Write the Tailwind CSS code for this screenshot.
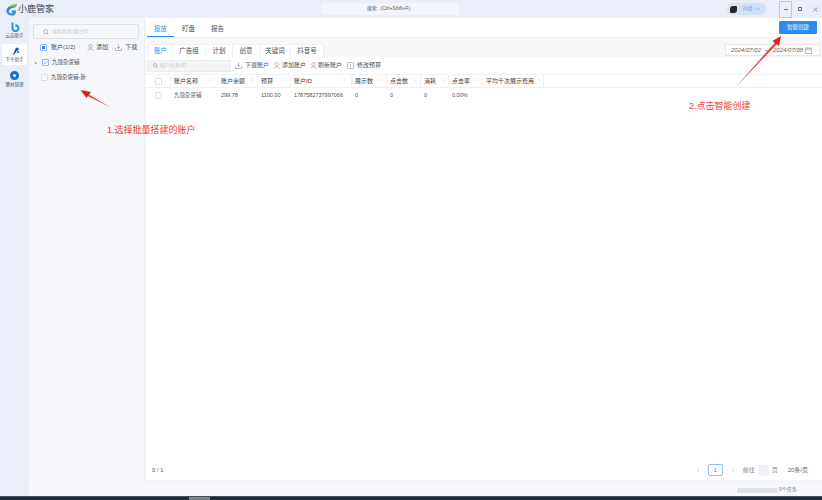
<!DOCTYPE html>
<html lang="zh">
<head>
<meta charset="utf-8">
<script src="https://cdn.jsdelivr.net/npm/@tailwindcss/browser@4"></script>
</head>
<body class="w-[822px] h-[500px] overflow-hidden bg-[#f4f6fa] text-[#4a4f57] font-['Liberation_Sans','Noto_Sans_CJK_SC',sans-serif] text-[6px]">
<div class="relative w-[822px] h-[500px] flex flex-col overflow-hidden">
  <!-- title bar -->
  <header class="h-[18px] shrink-0 bg-[#e9eef8] flex items-center relative">
    <div class="flex items-center pl-[5px] w-[322px]">
      <svg width="13" height="13" viewBox="0 0 13 13"><path d="M12 2 C7 2 3 3 1.500 6.500 C1 10 3 12.500 7 12.500 C10 12.500 11 10.500 11 7.500 L7 7.500 L6.500 9.500 L8.500 9.500 C8 10.500 5 11 4 9 C3.500 6.500 6 5 10 4.500 Z" fill="#2a8fd6"/><path d="M12.500 0.500 C9 1 6 1.500 4 3.500 L10 3.500 Z" fill="#9ccb3a"/></svg>
      <span class="text-[9px] leading-none text-[#3f4650]">小鹿管家</span>
    </div>
    <div class="w-[138px] h-[12px] bg-[#f3f5fa] rounded-[2px] flex items-center justify-center text-[5px] text-[#555]">搜索（Ctrl+Shift+F）</div>
    <div class="ml-[268px] w-[39px] h-[12px] rounded-full bg-[#cfe2fa] flex items-center">
      <span class="w-[12px] h-[12px] rounded-full bg-[#dfe3ea] flex items-center justify-center"><span class="w-[7px] h-[7px] rounded-[3px_1px_3px_1px] bg-[#25282d]"></span></span>
      <span class="ml-[3px] text-[5px] text-[#7f9cc0]">刘靖</span>
      <svg class="ml-[3px]" width="5" height="4" viewBox="0 0 5 4"><path d="M0.500 1 L2.500 3 L4.500 1" fill="none" stroke="#8aa5c8" stroke-width="0.600"/></svg>
    </div>
    <div class="ml-[13px] w-[13px] h-[17px] border border-[#c6cad0] flex items-center justify-center"><span class="w-[4px] h-px bg-[#777]"></span></div>
    <div class="w-[16px] flex justify-center"><span class="w-[4px] h-[4px] border border-[#777]"></span></div>
    <div class="w-[14px] flex justify-center"><svg width="5" height="5" viewBox="0 0 5 5"><path d="M0.500 0.500 L4.500 4.500 M4.500 0.500 L0.500 4.500" stroke="#777" stroke-width="0.700"/></svg></div>
  </header>

  <div class="flex flex-1 min-h-0">
    <!-- app rail -->
    <nav class="w-[29px] shrink-0 bg-[#e9eef8] flex flex-col items-center text-[4.500px] text-[#4c5868]">
      <div class="h-[24px] w-[25px] flex flex-col items-center justify-center pt-[1px]">
        <svg width="10" height="10" viewBox="0 0 10 10"><path d="M2.500 0.500 V6 A3 3 0 1 0 5.500 3.200" fill="none" stroke="#1a8fe0" stroke-width="1.900"/></svg>
        <span class="mt-[2px] leading-none">云店助手</span>
      </div>
      <div class="mt-[2px] h-[21px] w-[25px] bg-white rounded-[2px] flex flex-col items-center justify-center pt-[1px]">
        <svg width="10" height="9" viewBox="0 0 10 9"><path d="M1 8 C3 8 4 6 4.500 4 C5 2 6 0.500 8 0.500 L9 3 C7 3 6.500 4 6 5 C5 7 3 8.500 1 8 Z" fill="#1e4f9c"/><circle cx="8" cy="5" r="1.300" fill="#35b0c9"/></svg>
        <span class="mt-[2px] leading-none">千牛助手</span>
      </div>
      <div class="mt-[1px] h-[24px] w-[25px] flex flex-col items-center justify-center pt-[2px]">
        <span class="w-[9px] h-[9px] rounded-full border-[3px] border-[#0f6fdc] bg-white"></span>
        <span class="mt-[3px] leading-none">聚材管理</span>
      </div>
    </nav>

    <!-- accounts panel -->
    <aside class="w-[115px] shrink-0 ml-px mb-[13px] bg-[#f5f7fa] border-r border-b border-[#eceef2] pl-[3px] pt-[6px]">
      <div class="w-[106px] h-[15px] border border-[#dfe3e8] bg-[#f7f8fa] flex items-center rounded-[1px] pl-[9px] text-[#c6cad0] text-[5px]">
        <svg width="6" height="6" viewBox="0 0 6 6"><circle cx="2.600" cy="2.600" r="2" fill="none" stroke="#8a9099" stroke-width="0.600"/><path d="M4 4 L5.500 5.500" stroke="#8a9099" stroke-width="0.600"/></svg>
        <span class="ml-[3px]">搜索名称/备注ID</span>
      </div>
      <div class="flex items-center mt-[4px] h-[9px] pl-[7px]">
        <span class="w-[7px] h-[7px] rounded-[1px] border border-[#8fbdf2] flex items-center justify-center"><span class="w-[3px] h-[3px] bg-[#2d8cf0]"></span></span>
        <span class="ml-[4px]">账户(1/2)</span>
        <svg class="ml-[12px]" width="7" height="7" viewBox="0 0 7 7"><circle cx="3.500" cy="2.200" r="1.700" fill="none" stroke="#777" stroke-width="0.500"/><path d="M0.700 6.700 C1 4.300 6 4.300 6.300 6.700" fill="none" stroke="#777" stroke-width="0.500"/></svg>
        <span class="ml-[2px]">添加</span>
        <svg class="ml-[7px]" width="7" height="7" viewBox="0 0 7 7"><path d="M3.500 0.500 V4.500 M2 3 L3.500 4.500 L5 3 M0.500 4 V6.500 H6.500 V4" fill="none" stroke="#777" stroke-width="0.500"/></svg>
        <span class="ml-[3px]">下载</span>
      </div>
      <div class="flex items-center mt-[6px] h-[9px] pl-[2px]">
        <span class="w-0 h-0 border-y-[1.500px] border-y-transparent border-l-[2px] border-l-[#777]"></span>
        <span class="ml-[5px] w-[7px] h-[7px] rounded-[1px] border border-[#8fbdf2] flex items-center justify-center"><svg width="5" height="5" viewBox="0 0 5 5"><path d="M0.800 2.500 L2 3.700 L4.200 1.200" fill="none" stroke="#2d8cf0" stroke-width="0.600"/></svg></span>
        <span class="ml-[3px] text-[#3c4046] text-[5.500px]">九锦杂货铺</span>
      </div>
      <div class="flex items-center mt-[6px] h-[9px] pl-[8px]">
        <span class="w-[7px] h-[7px] rounded-[1px] border border-[#dcdfe4]"></span>
        <span class="ml-[3px] text-[#3c4046] text-[5.500px]">九锦杂货铺-新</span>
      </div>
    </aside>

    <!-- main -->
    <main class="w-[677px] ml-px mb-[20px] bg-white flex flex-col">
      <div class="h-[20px] shrink-0 flex items-end border-b border-[#eef0f3] relative pl-[1px]">
        <div class="w-[27px] h-[20px] pt-[4px] flex items-center justify-center text-[#2d8cf0] border-b border-[#2d8cf0] text-[6.500px]">投放</div>
        <div class="ml-[8px] h-[20px] pt-[4px] flex items-center text-[6.500px]">盯盘</div>
        <div class="ml-[16px] h-[20px] pt-[4px] flex items-center text-[6.500px]">报告</div>
        <div class="absolute right-[5px] top-[3px] w-[38px] h-[13px] rounded-[1px] bg-[#2d8cf0] text-white flex items-center justify-center text-[5.500px]">智能创建</div>
      </div>
      <div class="h-[19px] shrink-0 bg-[#f7f8fa] flex items-end pl-[2px] relative">
        <div class="w-[25px] h-[13px] bg-white flex items-center justify-center text-[#2d8cf0] text-[6.500px] border border-[#eef0f3] border-b-0">账户</div>
        <div class="w-[33px] h-[13px] bg-white flex items-center justify-center text-[6.500px] border-r border-t border-[#eef0f3]">广告组</div>
        <div class="w-[27px] h-[13px] bg-white flex items-center justify-center text-[6.500px] border-r border-t border-[#eef0f3]">计划</div>
        <div class="w-[27px] h-[13px] bg-white flex items-center justify-center text-[6.500px] border-r border-t border-[#eef0f3]">创意</div>
        <div class="w-[31px] h-[13px] bg-white flex items-center justify-center text-[6.500px] border-r border-t border-[#eef0f3]">关键词</div>
        <div class="w-[33px] h-[13px] bg-white flex items-center justify-center text-[6.500px] border-r border-t border-[#eef0f3]">抖音号</div>
        <div class="absolute left-[579px] top-[6px] w-[95px] h-[12px] bg-white border border-[#e4e7ec] flex items-center pl-[5px] text-[6px] italic text-[#666]">
          <span>2024/07/02</span><span class="ml-[4px] w-[4px] h-px bg-[#aaa]"></span><span class="ml-[4px]">2024/07/08</span>
          <svg class="ml-[2px]" width="7" height="7" viewBox="0 0 7 7"><path d="M0.500 1.200 H6.500 V6.500 H0.500 Z M0.500 2.800 H6.500 M2 0.300 V1.800 M5 0.300 V1.800" fill="none" stroke="#777" stroke-width="0.500"/></svg>
        </div>
      </div>
      <div class="h-[17px] shrink-0 bg-white flex items-center pl-[1px]">
        <div class="w-[84px] h-[12px] bg-[#f3f4f6] border border-[#e9ebee] flex items-center pl-[5px] text-[#c6cad0] text-[5px]">
          <svg width="5" height="5" viewBox="0 0 6 6"><circle cx="2.600" cy="2.600" r="2" fill="none" stroke="#8a9099" stroke-width="0.700"/><path d="M4 4 L5.500 5.500" stroke="#8a9099" stroke-width="0.700"/></svg>
          <span class="ml-[2px]">账户名称/ID</span>
        </div>
        <svg class="ml-[4px]" width="7" height="7" viewBox="0 0 7 7"><path d="M3.500 0.500 V4.500 M2 3 L3.500 4.500 L5 3 M0.500 4 V6.500 H6.500 V4" fill="none" stroke="#777" stroke-width="0.500"/></svg>
        <span class="ml-[3px]">下载账户</span>
        <svg class="ml-[4px]" width="7" height="7" viewBox="0 0 7 7"><circle cx="3.500" cy="2.200" r="1.700" fill="none" stroke="#777" stroke-width="0.500"/><path d="M0.700 6.700 C1 4.300 6 4.300 6.300 6.700" fill="none" stroke="#777" stroke-width="0.500"/></svg>
        <span class="ml-[2px]">添加账户</span>
        <svg class="ml-[4px]" width="7" height="7" viewBox="0 0 7 7"><circle cx="3.500" cy="2.200" r="1.700" fill="none" stroke="#777" stroke-width="0.500"/><path d="M0.700 6.700 C1 4.300 6 4.300 6.300 6.700" fill="none" stroke="#777" stroke-width="0.500"/></svg>
        <span class="ml-[1px]">刷新账户</span>
        <svg class="ml-[5px]" width="7" height="7" viewBox="0 0 7 7"><rect x="0.500" y="0.500" width="6" height="6" rx="1" fill="none" stroke="#777" stroke-width="0.500"/><path d="M3.500 2 V5" stroke="#777" stroke-width="0.500"/></svg>
        <span class="ml-[3px]">修改预算</span>
      </div>
      <!-- table -->
      <div class="grid grid-cols-[25px_47px_40px_33px_61px_35px_34px_28px_34px_61px] h-[14px] border-t border-b border-[#eef0f3] items-stretch text-[#3f444b]">
        <div class="flex items-center justify-center border-r border-[#f0f1f4]"><span class="w-[7px] h-[7px] rounded-[1px] border border-[#dcdfe4]"></span></div>
        <div class="flex items-center justify-between pl-[3px] pr-[5px] border-r border-[#f0f1f4]"><span>账户名称</span><span class="text-[#ccc] text-[5px]">▿</span></div>
        <div class="flex items-center justify-between pl-[3px] pr-[3px] border-r border-[#f0f1f4]"><span>账户余额</span><span class="text-[#ccc] text-[5px]">▿</span></div>
        <div class="flex items-center justify-between pl-[3px] pr-[3px] border-r border-[#f0f1f4]"><span>预算</span><span class="text-[#ccc] text-[5px]">▿</span></div>
        <div class="flex items-center justify-between pl-[3px] pr-[5px] border-r border-[#f0f1f4]"><span>账户ID</span><span class="text-[#ccc] text-[5px]">▿</span></div>
        <div class="flex items-center justify-between pl-[3px] pr-[3px] border-r border-[#f0f1f4]"><span>展示数</span><span class="text-[#ccc] text-[5px]">▿</span></div>
        <div class="flex items-center justify-between pl-[3px] pr-[3px] border-r border-[#f0f1f4]"><span>点击数</span><span class="text-[#ccc] text-[5px]">▿</span></div>
        <div class="flex items-center justify-between pl-[3px] pr-[3px] border-r border-[#f0f1f4]"><span>消耗</span><span class="text-[#ccc] text-[5px]">▿</span></div>
        <div class="flex items-center justify-between pl-[3px] pr-[3px] border-r border-[#f0f1f4]"><span>点击率</span><span class="text-[#ccc] text-[5px]">▿</span></div>
        <div class="flex items-center justify-between pl-[3px] pr-[2px] border-r border-[#f0f1f4]"><span>平均千次展示费用</span><span class="text-[#ccc] text-[5px]">▿</span></div>
      </div>
      <div class="grid grid-cols-[25px_47px_40px_33px_61px_35px_34px_28px_34px_61px] h-[14px] items-center text-[#4a4f57] text-[5.500px]">
        <div class="flex justify-center"><span class="w-[7px] h-[7px] rounded-[1px] border border-[#dcdfe4]"></span></div>
        <div class="pl-[3px]">九锦杂货铺</div>
        <div class="pl-[3px]">299.78</div>
        <div class="pl-[3px]">1100.00</div>
        <div class="pl-[3px]">1787582737997066</div>
        <div class="pl-[3px]">0</div>
        <div class="pl-[3px]">0</div>
        <div class="pl-[3px]">0</div>
        <div class="pl-[3px]">0.00%</div>
        <div></div>
      </div>
      <div class="flex-1"></div>
      <!-- pagination -->
      <div class="h-[20px] shrink-0 flex items-center pl-[6px] text-[6px] text-[#555]">
        <span>0 / 1</span>
        <div class="ml-auto flex items-center pr-[14px]">
          <svg width="4" height="6" viewBox="0 0 4 6"><path d="M3 1 L1 3 L3 5" fill="none" stroke="#c4c7cc" stroke-width="0.600"/></svg>
          <span class="ml-[8px] w-[15px] h-[12px] border border-[#8fbdf2] rounded-[2px] flex items-center justify-center text-[#2d8cf0]">1</span>
          <svg class="ml-[8px]" width="4" height="6" viewBox="0 0 4 6"><path d="M1 1 L3 3 L1 5" fill="none" stroke="#c4c7cc" stroke-width="0.600"/></svg>
          <span class="ml-[8px] text-[#888]">前往</span>
          <span class="ml-[3px] w-[11px] h-[11px] bg-[#f0f2f5]"></span>
          <span class="ml-[3px] text-[#888]">页</span>
          <span class="ml-[10px] text-[#666]">20条/页</span>
        </div>
      </div>
    </main>
  </div>

  <!-- status -->
  <div class="absolute left-[29px] right-0 bottom-[4px] h-[12px] bg-[#f7f8fa] flex items-center pl-[708px]">
    <span class="w-[41px] h-[5px] bg-[#dfe2e7]"></span>
    <span class="ml-[1px] text-[5px] text-[#777]">0个任务</span>
  </div>
  <!-- taskbar -->
  <div class="absolute left-0 right-0 bottom-0 h-[4px] bg-[#1e2a35] border-t border-[#44525e]">
    <span class="absolute left-[189px] top-0 w-[21px] h-[4px] bg-[#7b8288]"></span>
  </div>

  <!-- annotations -->
  <svg class="absolute left-0 top-0 pointer-events-none" width="822" height="500" viewBox="0 0 822 500">
    <path d="M110 107 L88 94 L86.500 95.500 Z" fill="#e8433f"/>
    <path d="M80.500 90 L91 92 L86.500 98 Z" fill="#e21c1c"/>
    <path d="M735 88 L775 42.500 L777 44 Z" fill="#e8433f"/>
    <path d="M781 36 L779 46 L772.500 41 Z" fill="#e21c1c"/>
  </svg>
  <span class="absolute left-[107px] top-[124px] text-[9px] leading-[12px] text-[#ef3b36]">1.选择批量搭建的账户</span>
  <span class="absolute left-[689px] top-[100px] text-[9px] leading-[12px] text-[#ef3b36]">2.点击智能创建</span>
</div>
</body>
</html>
